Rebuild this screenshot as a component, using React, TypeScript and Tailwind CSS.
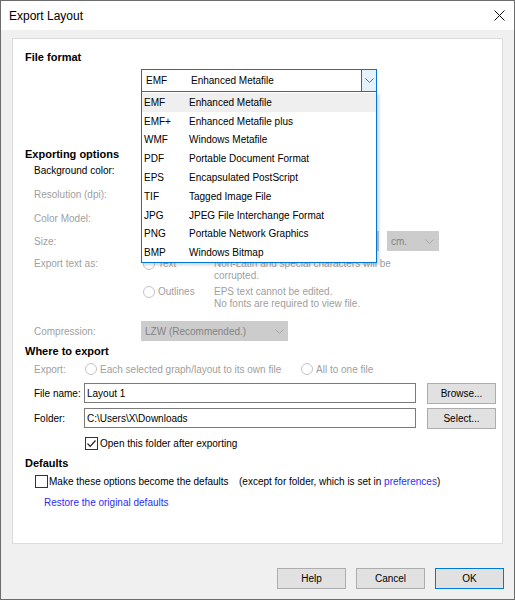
import React from 'react'

const formats = [
  ['EMF', 'Enhanced Metafile'],
  ['EMF+', 'Enhanced Metafile plus'],
  ['WMF', 'Windows Metafile'],
  ['PDF', 'Portable Document Format'],
  ['EPS', 'Encapsulated PostScript'],
  ['TIF', 'Tagged Image File'],
  ['JPG', 'JPEG File Interchange Format'],
  ['PNG', 'Portable Network Graphics'],
  ['BMP', 'Windows Bitmap'],
]

function Chevron({ color = '#6d6d6d' }: { color?: string }) {
  return (
    <svg width="9" height="5" viewBox="0 0 9 5" fill="none">
      <path d="M0.5 0.5 L4.5 4.5 L8.5 0.5" stroke={color} strokeWidth="1" />
    </svg>
  )
}

function Radio({ label, disabled = true }: { label: string; disabled?: boolean }) {
  return (
    <div className="flex items-center gap-[3px]">
      <span className={`w-[12px] h-[12px] rounded-full border bg-white ${disabled ? 'border-[#c4c4c4]' : 'border-[#333]'}`} />
      <span className={disabled ? 'text-[#a0a0a0]' : 'text-black'}>{label}</span>
    </div>
  )
}

function Checkbox({ checked }: { checked?: boolean }) {
  return (
    <span className="w-[13px] h-[13px] border border-[#333] bg-white flex items-center justify-center">
      {checked && (
        <svg width="11" height="11" viewBox="0 0 11 11" fill="none">
          <path d="M1.5 5.5 L4.2 8.3 L9.5 2.5" stroke="#222" strokeWidth="1.2" />
        </svg>
      )}
    </span>
  )
}

function Header({ children, className = '' }: { children: React.ReactNode; className?: string }) {
  return <div className={`h-[16px] flex items-center pl-[12px] text-[11px] font-bold ${className}`}>{children}</div>
}

function Button({ children, primary }: { children: React.ReactNode; primary?: boolean }) {
  return (
    <div
      className={`w-[69px] h-[21px] flex items-center justify-center bg-[#e1e1e1] border text-[10px] ${
        primary ? 'border-[#0078d7]' : 'border-[#adadad]'
      }`}
    >
      {children}
    </div>
  )
}

export default function App() {
  return (
    <div className="w-[515px] h-[600px] flex flex-col border border-[#6b6b6b] bg-[#f0f0f0] font-['Liberation_Sans',Arial,sans-serif] text-black">
      {/* title bar */}
      <div className="h-[29px] bg-white flex items-center justify-between pl-[8px] pr-[9px] text-[12px]">
        <span>Export Layout</span>
        <svg width="11" height="11" viewBox="0 0 11 11">
          <path d="M0.5 0.5 L10.5 10.5 M10.5 0.5 L0.5 10.5" stroke="#111" strokeWidth="1" />
        </svg>
      </div>

      <div className="mt-[8px] ml-[11px] w-[491px] h-[506px] border border-[#dcdcdc] bg-white flex flex-col text-[10px]">
        <Header className="mt-[10px]">File format</Header>

        {/* format combo */}
        <div className="mt-[4px] h-[23px] pl-[128px]">
          <div className="relative w-[236px] h-[23px]">
            <div className="w-full h-full border border-[#0078d7] flex">
              <span className="w-[49px] pl-[4px] flex items-center">EMF</span>
              <span className="flex-1 flex items-center">Enhanced Metafile</span>
              <span className="w-[15px] border-l border-[#0078d7] bg-[#e5f1fb] flex items-center justify-center">
                <Chevron />
              </span>
            </div>
            <div className="absolute z-10 left-0 top-full w-[236px] h-[171px] border border-t-0 border-[#0078d7] bg-white shadow-[2px_2px_3px_rgba(0,0,0,0.18)] flex flex-col pt-[1px]">
              {formats.map(([code, name], i) => (
                <div key={code} className={`h-[18.8px] flex items-center ${i === 0 ? 'bg-[#efefef]' : ''}`}>
                  <span className="w-[47px] pl-[2px]">{code}</span>
                  <span>{name}</span>
                </div>
              ))}
            </div>
          </div>
        </div>

        <Header className="mt-[54px]">Exporting options</Header>
        <div className="h-[16px] flex items-center pl-[21px]">Background color:</div>
        <div className="mt-[6px] h-[20px] flex items-center pl-[21px] text-[#a0a0a0]">Resolution (dpi):</div>
        <div className="mt-[4px] h-[20px] flex items-center pl-[21px] text-[#a0a0a0]">Color Model:</div>
        <div className="mt-[3px] h-[20px] flex items-center pl-[21px] text-[#a0a0a0]">
          <span className="w-[256px]">Size:</span>
          <span className="w-[89px] h-[20px] bg-[#cccccc]" />
          <span className="ml-[8px] w-[52px] h-[20px] bg-[#cccccc] flex items-center justify-between pl-[4px] pr-[5px] text-[#838383]">
            cm.
            <Chevron color="#a8a8a8" />
          </span>
        </div>

        {/* export text as */}
        <div className="mt-[7px] flex pl-[21px] text-[#a0a0a0] leading-[12px]">
          <span className="w-[109px]">Export text as:</span>
          <div className="flex flex-col gap-[4px]">
            <div className="flex">
              <div className="w-[71px]">
                <Radio label="Text" />
              </div>
              <div>
                Non-Latin and special characters will be
                <br />
                corrupted.
              </div>
            </div>
            <div className="flex">
              <div className="w-[71px]">
                <Radio label="Outlines" />
              </div>
              <div>
                EPS text cannot be edited.
                <br />
                No fonts are required to view file.
              </div>
            </div>
          </div>
        </div>

        <div className="mt-[11px] h-[20px] flex items-center pl-[21px] text-[#a0a0a0]">
          <span className="w-[107px]">Compression:</span>
          <span className="w-[147px] h-[20px] bg-[#cccccc] flex items-center justify-between pl-[4px] pr-[4px] text-[#838383]">
            LZW (Recommended.)
            <Chevron color="#a8a8a8" />
          </span>
        </div>

        <Header className="mt-[2px]">Where to export</Header>
        <div className="h-[20px] flex items-center pl-[21px]">
          <span className="w-[51px] text-[#a0a0a0]">Export:</span>
          <div className="w-[216px]">
            <Radio label="Each selected graph/layout to its own file" />
          </div>
          <Radio label="All to one file" />
        </div>
        <div className="mt-[4px] h-[20px] flex items-center pl-[21px]">
          <span className="w-[50px]">File name:</span>
          <span className="w-[332px] h-[20px] border border-[#7a7a7a] flex items-center pl-[2px]">Layout 1</span>
          <span className="ml-[11px]">
            <Button>Browse...</Button>
          </span>
        </div>
        <div className="mt-[5px] h-[20px] flex items-center pl-[21px]">
          <span className="w-[50px]">Folder:</span>
          <span className="w-[332px] h-[20px] border border-[#7a7a7a] flex items-center pl-[2px]">C:\Users\X\Downloads</span>
          <span className="ml-[11px]">
            <Button>Select...</Button>
          </span>
        </div>
        <div className="mt-[7px] h-[16px] flex items-center gap-[2px] pl-[72px]">
          <Checkbox checked />
          <span>Open this folder after exporting</span>
        </div>

        <Header className="mt-[4px]">Defaults</Header>
        <div className="mt-[2px] h-[16px] flex items-center pl-[22px]">
          <Checkbox />
          <span className="ml-[1px] w-[190px]">Make these options become the defaults</span>
          <span>
            (except for folder, which is set in <span className="text-[#2b2bff]">preferences</span>)
          </span>
        </div>
        <div className="mt-[5px] h-[16px] flex items-center pl-[31px] text-[#2b2bff]">Restore the original defaults</div>
      </div>

      <div className="mt-[24px] flex justify-end gap-[10px] pr-[10px]">
        <Button>Help</Button>
        <Button>Cancel</Button>
        <Button primary>OK</Button>
      </div>
    </div>
  )
}
